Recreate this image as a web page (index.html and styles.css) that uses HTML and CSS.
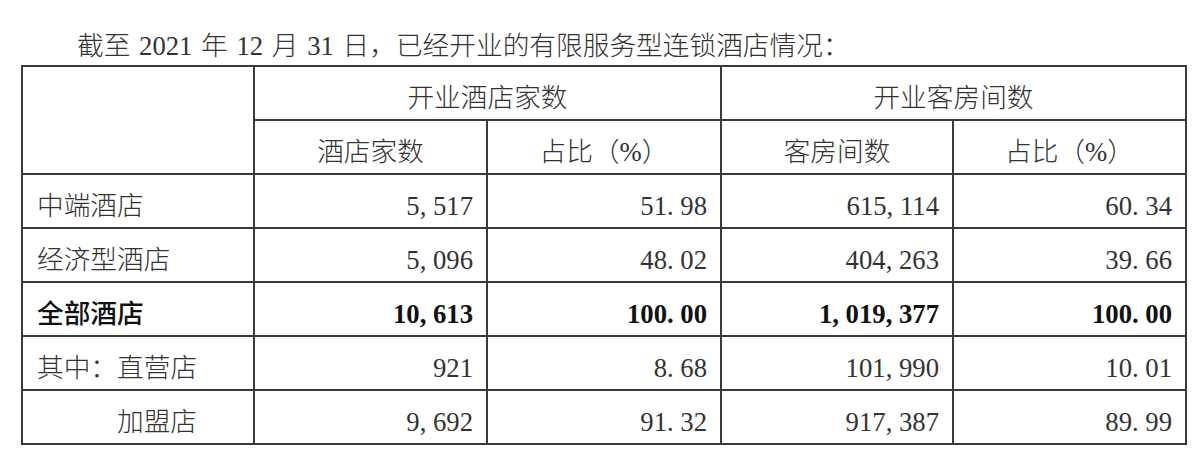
FILE: index.html
```html
<!DOCTYPE html>
<html lang="zh-CN">
<head>
<meta charset="utf-8">
<title>有限服务型连锁酒店情况</title>
<link rel="stylesheet" href="styles.css">
</head>
<body>
<p class="intro">截至 2021 年 12 月 31 日，已经开业的有限服务型连锁酒店情况：</p>
<table class="stats">
  <colgroup>
    <col class="c1"><col class="c2"><col class="c3"><col class="c4"><col class="c5">
  </colgroup>
  <thead>
    <tr class="r-top">
      <th rowspan="2"></th>
      <th colspan="2">开业酒店家数</th>
      <th colspan="2">开业客房间数</th>
    </tr>
    <tr>
      <th>酒店家数</th>
      <th>占比（%）</th>
      <th>客房间数</th>
      <th>占比（%）</th>
    </tr>
  </thead>
  <tbody>
    <tr>
      <td class="label">中端酒店</td>
      <td class="num">5<i class="sep">,</i>517</td>
      <td class="num">51<i class="sep">.</i>98</td>
      <td class="num">615<i class="sep">,</i>114</td>
      <td class="num">60<i class="sep">.</i>34</td>
    </tr>
    <tr>
      <td class="label">经济型酒店</td>
      <td class="num">5<i class="sep">,</i>096</td>
      <td class="num">48<i class="sep">.</i>02</td>
      <td class="num">404<i class="sep">,</i>263</td>
      <td class="num">39<i class="sep">.</i>66</td>
    </tr>
    <tr class="total">
      <td class="label">全部酒店</td>
      <td class="num">10<i class="sep">,</i>613</td>
      <td class="num">100<i class="sep">.</i>00</td>
      <td class="num">1<i class="sep">,</i>019<i class="sep">,</i>377</td>
      <td class="num">100<i class="sep">.</i>00</td>
    </tr>
    <tr>
      <td class="label">其中：直营店</td>
      <td class="num">921</td>
      <td class="num">8<i class="sep">.</i>68</td>
      <td class="num">101<i class="sep">,</i>990</td>
      <td class="num">10<i class="sep">.</i>01</td>
    </tr>
    <tr>
      <td class="label sub">加盟店</td>
      <td class="num">9<i class="sep">,</i>692</td>
      <td class="num">91<i class="sep">.</i>32</td>
      <td class="num">917<i class="sep">,</i>387</td>
      <td class="num">89<i class="sep">.</i>99</td>
    </tr>
  </tbody>
</table>
</body>
</html>
```

FILE: styles.css
```css
html, body {
  margin: 0;
  padding: 0;
  background: #ffffff;
}

body {
  padding-left: 21px;
  font-family: "Liberation Serif", "Noto Sans CJK SC", serif;
  font-size: 26.7px;
  font-weight: 300;
  color: #333333;
}

.intro {
  margin: 0;
  padding-top: 27px;
  height: 38px;
  line-height: 38px;
  text-indent: 56px;
  word-spacing: 2px;
  white-space: nowrap;
}

.stats {
  border-collapse: separate;
  border-spacing: 0;
  table-layout: fixed;
  width: 1166px;
  border-top: 2px solid #3a3a3a;
  border-left: 2px solid #3a3a3a;
}

.c1 { width: 232px; }
.c2 { width: 233px; }
.c3 { width: 234px; }
.c4 { width: 232px; }
.c5 { width: 233px; }

.stats th,
.stats td {
  border-right: 2px solid #3a3a3a;
  border-bottom: 2px solid #3a3a3a;
  padding: 9px 13px 0 13px;
  line-height: 40px;
  font-weight: 300;
  white-space: nowrap;
  vertical-align: middle;
}

.stats tr {
  height: 54px;
}

.stats th {
  text-align: center;
}

.stats .label {
  text-align: left;
  padding-left: 14px;
}

.stats .sub {
  padding-left: 94px;
}

.stats .num {
  text-align: right;
}

.sep {
  display: inline-block;
  width: 0.5em;
  font-style: normal;
  text-align: left;
}

.stats .total td {
  font-weight: 700;
  color: #111111;
}

.stats .total .label {
  font-weight: 500;
}
```
